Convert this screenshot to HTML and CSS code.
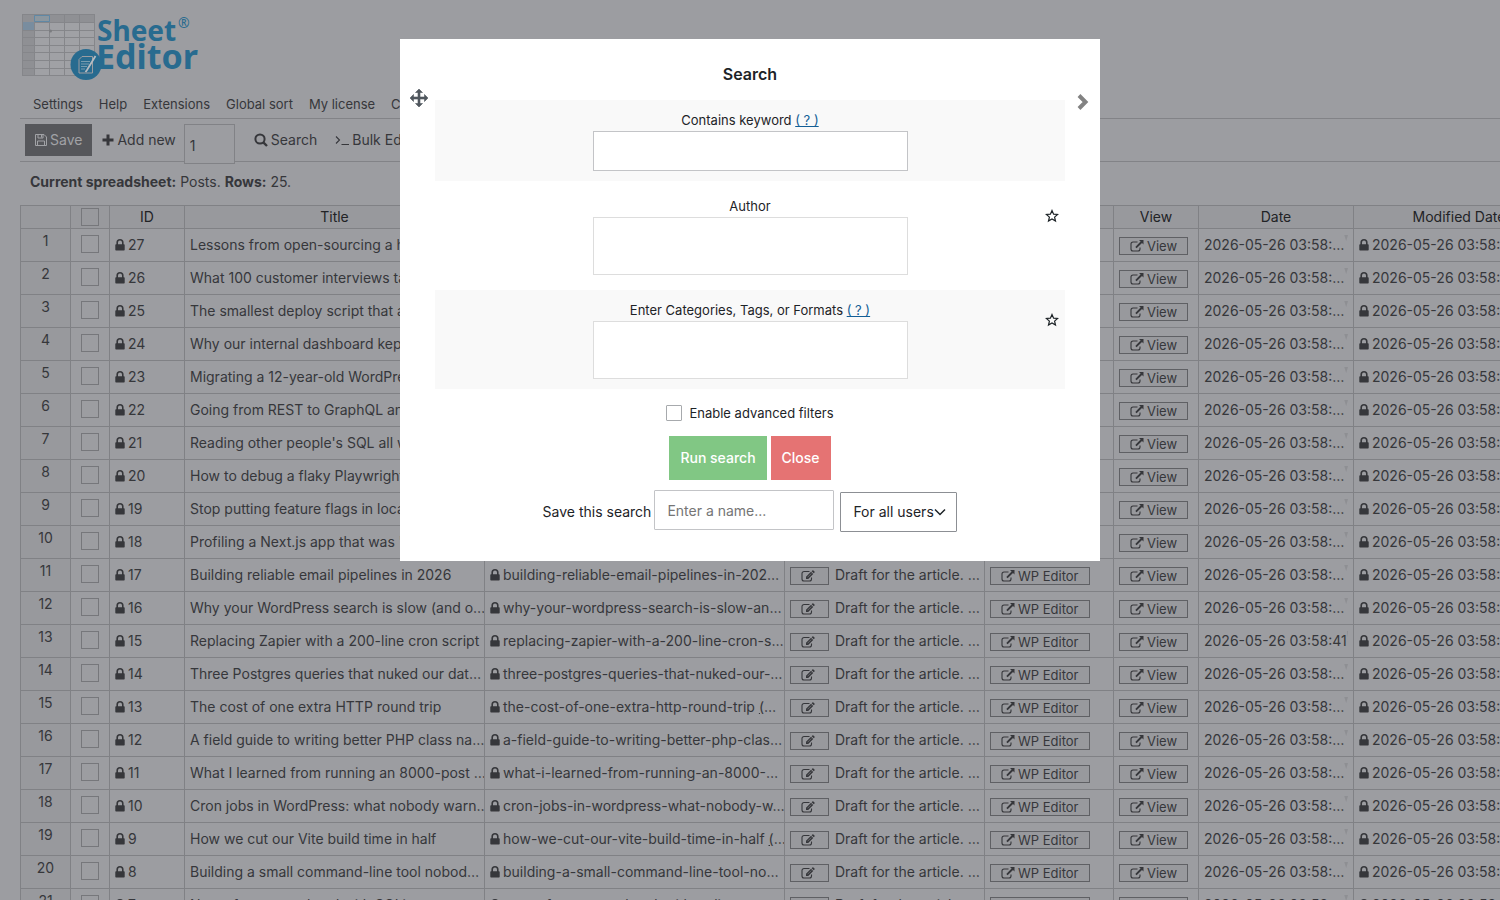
FILE: index.html
```html
<!DOCTYPE html>
<html lang="en">
<head>
<meta charset="utf-8">
<title>Sheet Editor - Posts</title>
<link rel="stylesheet" href="styles.css">
</head>
<body>
<svg class="sprite" aria-hidden="true">
  <symbol id="lock" viewBox="0 0 10 12"><path d="M2.2 6V3.6a2.8 2.8 0 0 1 5.6 0V6" fill="none" stroke="currentColor" stroke-width="1.6"/><rect x="0.3" y="5.2" width="9.4" height="6.3" rx="0.7" fill="currentColor"/></symbol>
  <symbol id="external" viewBox="0 0 14 12"><path d="M7.5 2H3a2 2 0 0 0-2 2v5a2 2 0 0 0 2 2h5a2 2 0 0 0 2-2V7.5" fill="none" stroke="currentColor" stroke-width="1.1"/><path d="M9 0h4.5v4.5L12 3 6.6 8.300l-1.300-1.300L10.600 1.600z" fill="currentColor"/></symbol>
  <symbol id="edit" viewBox="0 0 14 12"><path d="M8.500 1.500H3a2 2 0 0 0-2 2V9a2 2 0 0 0 2 2h5.500a2 2 0 0 0 2-2V7.500" fill="none" stroke="currentColor" stroke-width="1.100"/><path d="M5 9V6.800l5-5L12.200 4l-5 5zM10.600 1.200l.8-.8q.5-.4 1 0l1.100 1.200q.4.500 0 1l-.7.700z" fill="currentColor"/><path d="M6.500 7.300l3.800-3.800" stroke="#9c9da1" stroke-width=".5"/></symbol>
</svg>

<div class="page">
  <header>
    <svg class="logo" viewBox="0 0 180 70" role="img" aria-label="Sheet Editor">
      <rect x="0.500" y="0.500" width="72" height="61" fill="#a0a1a5" stroke="#85868a"/>
      <path d="M1 1h71v7H1zM1 8h11v53H1z" fill="#8f9094"/>
      <path d="M12.500 1v60M27.500 1v60M42.500 1v60M57.500 1v60M1 8.500h71M1 16.500h71M1 23.500h71M1 31.500h71M1 38.500h71M1 46.500h71M1 54.500h71" stroke="#85868a" fill="none"/>
      <path d="M12.500 1.500h15v6h-15z" fill="#8c979f" stroke="#6088a5"/>
      <path d="M1 8h11v8H1z" fill="#798d9f"/>
      <circle cx="28.500" cy="17" r="1.500" fill="#7b7c80"/>
      <circle cx="64" cy="50.500" r="15.500" fill="#286b8f"/>
      <path d="M60 42.500h10.500v16.500H57V45.500z" fill="none" stroke="#9c9da1"/>
      <path d="M59 47.500h9M59 50h8M59 52.500h6M59 55h4" stroke="#789caf"/>
      <path d="M73.500 42L65 56l-1.500 2" fill="none" stroke="#b7bcc2" stroke-width="1.800"/>
      <text class="logo-word" x="75" y="27" font-size="28">Sheet</text>
      <text class="logo-word" x="74" y="55" font-size="34">Editor</text>
      <text class="logo-mark" x="156" y="14" font-size="14">®</text>
    </svg>
    <nav class="menu">
      <a href="#">Settings</a><a href="#">Help</a><a href="#">Extensions</a><a href="#">Global sort</a><a href="#">My license</a><a href="#">Contact us</a>
    </nav>
    <div class="toolbar">
      <button class="save" type="button"><svg width="12" height="12" viewBox="0 0 12 12" fill="none" stroke="currentColor"><path d="M.5.5h8.500l2.500 2.500v8.500H.5zM3 .5v3.500h5V.5M6.500 1v2.500M2.500 11.500V7h7v4.500"/></svg>Save</button>
      <button class="tool" type="button"><svg width="12" height="12" viewBox="0 0 12 12"><path d="M4.500.5h3v4h4v3h-4v4h-3v-4h-4v-3h4z" fill="currentColor"/></svg>Add new</button>
      <input class="count" type="text" value="1" aria-label="Number of rows">
      <button class="tool search" type="button"><svg width="14" height="14" viewBox="0 0 14 14" fill="none" stroke="currentColor"><circle cx="6" cy="6" r="4.600" stroke-width="2"/><path d="M9.300 9.300l3.700 3.700" stroke-width="2.400"/></svg>Search</button>
      <button class="tool bulk" type="button"><svg width="14" height="12" viewBox="0 0 14 12" fill="none" stroke="currentColor"><path d="M1 2.500l3.500 3.500L1 9.500M6.500 10.500H14" stroke-width="1.100"/></svg>Bulk Edit</button>
    </div>
    <p class="info"><b>Current spreadsheet:</b> Posts. <b>Rows:</b> 25.</p>
  </header>

  <table class="sheet">
    <colgroup><col class="c-num"><col class="c-check"><col class="c-id"><col class="c-title"><col class="c-slug"><col class="c-content"><col class="c-editor"><col class="c-view"><col class="c-date"><col class="c-modified"></colgroup>
    <thead><tr><th></th><th class="check-all"><input type="checkbox" aria-label="Select all"></th><th>ID</th><th>Title</th><th>URL Slug</th><th>Content</th><th>WP Editor</th><th>View</th><th>Date</th><th>Modified Date</th></tr></thead>
    <tbody id="rows"></tbody>
  </table>
</div>

<div class="overlay">
  <form class="modal" role="dialog" aria-labelledby="dialog-title">
    <button class="icon-button move" type="button" aria-label="Move"><svg width="18" height="18" viewBox="0 0 18 18"><path d="M9 0l3.500 3.500H10V8h4.500V5.500L18 9l-3.500 3.500V10H10v4.500h2.500L9 18l-3.500-3.500H8V10H3.500v2.500L0 9l3.500-3.500V8H8V3.500H5.500z" fill="#50575e" stroke="#50575e" stroke-width=".6"/></svg></button>
    <button class="icon-button next" type="button" aria-label="Next"><svg width="12" height="16" viewBox="0 0 12 16"><path d="M2 1.500L8.500 8 2 14.500" fill="none" stroke="#828282" stroke-width="4"/></svg></button>
    <h3 id="dialog-title">Search</h3>
    <div class="field shaded">
      <div class="label"><label for="keyword">Contains keyword</label> <a href="#">( ? )</a></div>
      <input class="keyword" id="keyword" type="text">
    </div>
    <div class="field">
      <div class="label"><label for="author">Author</label></div>
      <input class="picker" id="author" type="text">
      <button class="icon-button star" type="button" aria-label="Favorite author"><svg width="14" height="14" viewBox="0 0 14 14"><path d="M7 1.500l1.600 3.700 4 .3-3 2.600.9 4L7 10l-3.500 2.100.9-4-3-2.600 4-.3z" fill="none" stroke="#1d2327" stroke-width="1.200"/></svg></button>
    </div>
    <div class="field shaded">
      <div class="label"><label for="terms">Enter Categories, Tags, or Formats</label> <a href="#">( ? )</a></div>
      <input class="picker" id="terms" type="text">
      <button class="icon-button star" type="button" aria-label="Favorite terms"><svg width="14" height="14" viewBox="0 0 14 14"><path d="M7 1.500l1.600 3.700 4 .3-3 2.600.9 4L7 10l-3.500 2.100.9-4-3-2.600 4-.3z" fill="none" stroke="#1d2327" stroke-width="1.200"/></svg></button>
    </div>
    <label class="advanced"><input type="checkbox">Enable advanced filters</label>
    <div class="actions"><button class="run" type="submit">Run search</button><button class="close" type="button">Close</button></div>
    <div class="save-search">
      <label for="name">Save this search</label>
      <input id="name" type="text" placeholder="Enter a name...">
      <select aria-label="Visibility"><option>For all users</option></select>
    </div>
  </form>
</div>
<script src="app.js"></script>
</body>
</html>
```

FILE: styles.css
```css
* { box-sizing: border-box; }
body { margin: 0; background: #9c9da1; color: #36373b; font: 14px/20px Inter, "Liberation Sans", sans-serif; overflow: hidden; }
button, input, select { font: inherit; color: inherit; }
button { cursor: pointer; }
.sprite { display: none; }
.page { padding: 14px 0 0 20px; height: 100vh; overflow: hidden; }
.logo { display: block; width: 180px; height: 70px; margin-left: 2px; overflow: visible; }
.logo-word { font-family: "Noto Sans", sans-serif; font-weight: 700; fill: #286b8f; }
.logo-mark { font-family: "Noto Sans", sans-serif; fill: #286b8f; }
.menu { display: flex; gap: 16px; padding: 10px 13px 4px; border-bottom: 1px solid #828387; font-size: 13px; }
.menu a { color: inherit; text-decoration: none; white-space: nowrap; }
.toolbar { display: flex; align-items: flex-start; height: 43px; padding: 5px 5px 0; border-bottom: 1px solid #828387; }
.save, .tool { display: flex; align-items: center; gap: 3px; height: 32px; padding: 0 8px 0 10px; border: 0; background: none; white-space: nowrap; }
.save { padding: 0 10px; background: #56575b; color: #a1a2a6; }
.tool.search { margin-left: 9px; }
.count { width: 51px; height: 40px; padding: 2px 5px 0; border: 1px solid #818286; background: #9c9da1; }
.info { margin: 0; padding: 10px 10px 13px; }

.sheet { width: 1544px; table-layout: fixed; border-collapse: collapse; }
.sheet th, .sheet td { padding: 0 0 0 5px; border: 1px solid #808185; overflow: hidden; white-space: nowrap; text-align: left; font-weight: 400; }
.sheet thead tr { height: 23px; }
.sheet tbody tr { height: 33px; }
.sheet thead th { padding: 0; background: #98999d; color: #222326; text-align: center; }
.sheet thead .check-all { padding-bottom: 2px; line-height: 18px; }
.sheet tbody th { padding: 0 0 8px; background: #98999d; text-align: center; }
.sheet .check { padding: 0 0 5px; text-align: center; }
.sheet a { color: inherit; }
.c-num { width: 50px; }
.c-check { width: 39px; }
.c-id { width: 75px; }
.c-title, .c-slug { width: 300px; }
.c-content { width: 200px; }
.c-editor { width: 129px; }
.c-view { width: 85px; }
.c-date { width: 155px; }
.c-modified { width: 211px; }
input[type="checkbox"] { display: inline-block; appearance: none; width: 18px; height: 18px; margin: 0; border: 1px solid #76777b; vertical-align: middle; }
.lock { width: 10px; height: 12px; margin-right: 3px; vertical-align: -1px; }
.content { display: flex; align-items: center; gap: 6px; }
.cell-button { display: inline-flex; align-items: center; gap: 3px; height: 18px; margin-top: 1px; padding: 0 10px; border: 1px solid #5f6064; background: #98999d; font-size: 13px; vertical-align: middle; }
.cell-button svg { width: 14px; height: 12px; }
.cell-button.edit { width: 39px; padding: 0 10px; margin-top: 2px; }
.date { display: flex; justify-content: space-between; padding-right: 5px; }
.date i { width: 5px; height: 6px; background: #8e8f93; clip-path: polygon(0 0, 100% 0, 50% 100%); }

.overlay { position: fixed; inset: 0; display: flex; justify-content: center; align-items: flex-start; padding-top: 39px; }
.modal { position: relative; width: 700px; padding: 25px 35px 29px; background: #fff; color: #1d2327; text-align: center; font-size: 13px; }
.modal h3 { margin: 0 0 16px; font-size: 16px; line-height: 20px; font-weight: 600; }
.icon-button { position: absolute; display: flex; padding: 0; border: 0; background: none; }
.move { left: 10px; top: 50px; }
.next { right: 11px; top: 55px; }
.star { right: 6px; top: 23px; }
.field { position: relative; margin-bottom: 5px; padding: 10px; }
.field.shaded { background: #f9f9f9; }
.label { margin-bottom: 1px; }
.modal a { color: #135e96; }
.modal input[type="text"] { border: 1px solid #c3c4c7; border-radius: 0; background: #fff; }
.field input { display: block; width: 315px; margin: 0 auto; padding: 0 8px; }
.keyword { height: 40px; }
.modal input.picker[type="text"] { height: 58px; border-color: #ddd; }
.advanced { display: flex; justify-content: center; align-items: center; gap: 7px; margin: 14px 0 13px; }
.modal input[type="checkbox"] { width: 16px; height: 16px; border-color: #a7aaad; border-radius: 1px; }
.actions { display: flex; justify-content: center; gap: 4px; margin-bottom: 10px; font-size: 14px; }
.actions button { height: 44px; padding: 0 11px; border: 0; color: #fff; font-weight: 500; }
.run { background: #81c784; }
.close { background: #e57373; }
.save-search { display: flex; justify-content: center; font-size: 14px; }
.save-search label { padding: 12px 3px 0 0; }
.modal .save-search input { width: 180px; height: 40px; margin-right: 6px; padding: 0 12px; border-radius: 1px; }
.save-search input::placeholder { color: #757575; }
.save-search select { width: 117px; height: 40px; margin-top: 2px; padding: 0 12px; border: 1px solid #8c8f94; border-radius: 1px; appearance: none; background: #fff url("data:image/svg+xml,%3Csvg xmlns='http://www.w3.org/2000/svg' width='12' height='8'%3E%3Cpath d='M1 1.500l5 5 5-5' fill='none' stroke='%231d2327' stroke-width='1.500'/%3E%3C/svg%3E") no-repeat right 10px center; }
```

FILE: app.js
```js
const posts = [
  [27, "Lessons from open-sourcing a hash library", "lessons-from-open-sourcing-a…"],
  [26, "What 100 customer interviews taught…", "what-100-customer-interviews…"],
  [25, "The smallest deploy script that actua…", "the-smallest-deploy-script…"],
  [24, "Why our internal dashboard kept brea…", "why-our-internal-dashboard…"],
  [23, "Migrating a 12-year-old WordPress…", "migrating-a-12-year-old…"],
  [22, "Going from REST to GraphQL and back", "going-from-rest-to-graphql…"],
  [21, "Reading other people's SQL all week", "reading-other-peoples-sql…"],
  [20, "How to debug a flaky Playwright test", "how-to-debug-a-flaky…"],
  [19, "Stop putting feature flags in localSto…", "stop-putting-feature-flags…"],
  [18, "Profiling a Next.js app that was \"fine\"", "profiling-a-next-js-app…"],
  [17, "Building reliable email pipelines in 2026", "building-reliable-email-pipelines-in-202…"],
  [16, "Why your WordPress search is slow (and o…", "why-your-wordpress-search-is-slow-an…"],
  [15, "Replacing Zapier with a 200-line cron script", "replacing-zapier-with-a-200-line-cron-s…"],
  [14, "Three Postgres queries that nuked our dat…", "three-postgres-queries-that-nuked-our-…"],
  [13, "The cost of one extra HTTP round trip", "the-cost-of-one-extra-http-round-trip <a href=\"#\">(</a>…"],
  [12, "A field guide to writing better PHP class na…", "a-field-guide-to-writing-better-php-clas…"],
  [11, "What I learned from running an 8000-post …", "what-i-learned-from-running-an-8000-…"],
  [10, "Cron jobs in WordPress: what nobody warn…", "cron-jobs-in-wordpress-what-nobody-w…"],
  [9, "How we cut our Vite build time in half", "how-we-cut-our-vite-build-time-in-half <a href=\"#\">(</a>…"],
  [8, "Building a small command-line tool nobod…", "building-a-small-command-line-tool-no…"],
  [7, "Notes from a weekend with SQLite", "notes-from-a-weekend-with-sqlite"]
];
const lock = '<svg class="lock"><use href="#lock"/></svg>';
const external = '<svg><use href="#external"/></svg>';
document.getElementById("rows").innerHTML = posts.map(([id, title, slug], i) => `
  <tr>
    <th>${i + 1}</th>
    <td class="check"><input type="checkbox" aria-label="Select post ${id}"></td>
    <td>${lock}${id}</td>
    <td>${title}</td>
    <td>${lock}${slug}</td>
    <td><div class="content"><button class="cell-button edit" type="button" aria-label="Edit"><svg><use href="#edit"/></svg></button><span>Draft for the article. …</span></div></td>
    <td><button class="cell-button" type="button">${external}WP Editor</button></td>
    <td><button class="cell-button" type="button">${external}View</button></td>
    <td><div class="date"><span>2026-05-26 03:58:${id === 15 ? "41" : "…"}</span><i></i></div></td>
    <td>${lock}2026-05-26 03:58:41</td>
  </tr>`).join("");
```
